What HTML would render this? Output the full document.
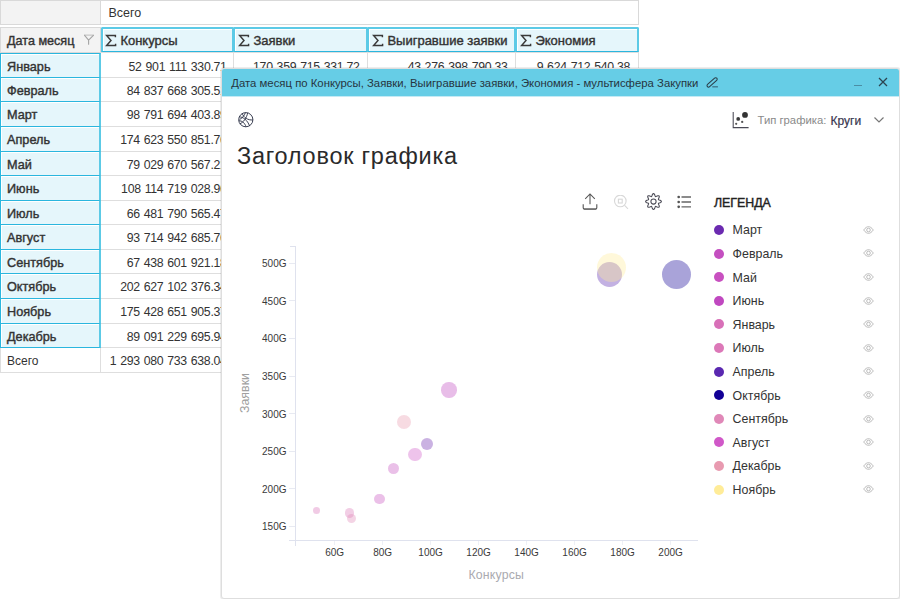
<!DOCTYPE html>
<html><head><meta charset="utf-8"><style>
*{box-sizing:border-box}
html,body{margin:0;padding:0;width:900px;height:599px;overflow:hidden;background:#fff;font-family:"Liberation Sans",sans-serif;color:#333}
.a{position:absolute}
.t{position:absolute;white-space:pre;line-height:1}
.sb{-webkit-text-stroke:0.4px currentColor}
</style></head><body>

<div class="a" style="left:0;top:0;width:101px;height:25px;background:#f3f3f3;border:1px solid #d9d9d9"></div>
<div class="a" style="left:100px;top:0;width:539px;height:25px;background:#fff;border:1px solid #d9d9d9"></div>
<div class="t" style="left:108.5px;top:7.3px;font-size:12.5px">Всего</div>
<div class="a" style="left:0;top:27px;width:101px;height:26px;background:#f3f3f3;border:1px solid #d9d9d9"></div>
<div class="t sb" style="left:7px;top:35px;font-size:12.6px;color:#333">Дата месяц</div>
<svg class="a" style="left:83px;top:34px" width="13" height="12" viewBox="0 0 13 12" fill="none" stroke-linecap="round" stroke-linejoin="round"><path d="M1.6 1.1H10.4" stroke="#c8c8c8" stroke-width="1.1"/><path d="M1.6 1.3L5.6 6.2V10.2M10.4 1.3L5.6 6.2" stroke="#a4a4a4" stroke-width="1.1"/></svg>
<div class="a" style="left:101px;top:27px;width:133px;height:25px;background:#e5f6fb;border-top:2px solid #5ccae6;border-left:2px solid #5ccae6;border-right:2px solid #5ccae6;border-bottom:1px solid #2ab6de;border-radius:2px 2px 0 0;box-shadow:inset 1px 1px 0 #fff"></div>
<svg class="a" style="left:105px;top:33px" width="12" height="14" viewBox="0 0 12 14" fill="none" stroke="#3a3a3a" stroke-width="1.45" stroke-linejoin="miter"><path d="M10.4 4.2V2.5H1.6L6 7.6 1.6 12.5H10.6V10.8"/></svg>
<div class="t sb" style="left:120.4px;top:33.9px;font-size:13px;color:#333">Конкурсы</div>
<div class="a" style="left:233px;top:27px;width:135px;height:25px;background:#e5f6fb;border-top:2px solid #5ccae6;border-left:2px solid #5ccae6;border-right:2px solid #5ccae6;border-bottom:1px solid #2ab6de;border-radius:2px 2px 0 0;box-shadow:inset 1px 1px 0 #fff"></div>
<svg class="a" style="left:238px;top:33px" width="12" height="14" viewBox="0 0 12 14" fill="none" stroke="#3a3a3a" stroke-width="1.45" stroke-linejoin="miter"><path d="M10.4 4.2V2.5H1.6L6 7.6 1.6 12.5H10.6V10.8"/></svg>
<div class="t sb" style="left:253.4px;top:33.9px;font-size:13px;color:#333">Заявки</div>
<div class="a" style="left:367px;top:27px;width:149px;height:25px;background:#e5f6fb;border-top:2px solid #5ccae6;border-left:2px solid #5ccae6;border-right:2px solid #5ccae6;border-bottom:1px solid #2ab6de;border-radius:2px 2px 0 0;box-shadow:inset 1px 1px 0 #fff"></div>
<svg class="a" style="left:372px;top:33px" width="12" height="14" viewBox="0 0 12 14" fill="none" stroke="#3a3a3a" stroke-width="1.45" stroke-linejoin="miter"><path d="M10.4 4.2V2.5H1.6L6 7.6 1.6 12.5H10.6V10.8"/></svg>
<div class="t sb" style="left:387.4px;top:33.9px;font-size:13px;color:#333">Выигравшие заявки</div>
<div class="a" style="left:515px;top:27px;width:124px;height:25px;background:#e5f6fb;border-top:2px solid #5ccae6;border-left:2px solid #5ccae6;border-right:2px solid #5ccae6;border-bottom:1px solid #2ab6de;border-radius:2px 2px 0 0;box-shadow:inset 1px 1px 0 #fff"></div>
<svg class="a" style="left:520px;top:33px" width="12" height="14" viewBox="0 0 12 14" fill="none" stroke="#3a3a3a" stroke-width="1.45" stroke-linejoin="miter"><path d="M10.4 4.2V2.5H1.6L6 7.6 1.6 12.5H10.6V10.8"/></svg>
<div class="t sb" style="left:535.4px;top:33.9px;font-size:13px;color:#333">Экономия</div>
<div class="a" style="left:100px;top:52px;width:134px;height:26px;border:1px solid #dedede;background:#fff"></div>
<div class="t" style="right:673.40px;top:61.00px;font-size:12.3px;letter-spacing:-0.3px;word-spacing:0.8px;color:#333">52 901 111 330.71</div>
<div class="a" style="left:233px;top:52px;width:135px;height:26px;border:1px solid #dedede;background:#fff"></div>
<div class="t" style="right:540.50px;top:61.00px;font-size:12.3px;letter-spacing:-0.3px;word-spacing:0.8px;color:#333">170 359 715 331.72</div>
<div class="a" style="left:367px;top:52px;width:149px;height:26px;border:1px solid #dedede;background:#fff"></div>
<div class="t" style="right:392.50px;top:61.00px;font-size:12.3px;letter-spacing:-0.3px;word-spacing:0.8px;color:#333">43 276 398 790.33</div>
<div class="a" style="left:515px;top:52px;width:124px;height:26px;border:1px solid #dedede;background:#fff"></div>
<div class="t" style="right:270.00px;top:61.00px;font-size:12.3px;letter-spacing:-0.3px;word-spacing:0.8px;color:#333">9 624 712 540.38</div>
<div class="a" style="left:100px;top:77px;width:134px;height:25px;border:1px solid #dedede;background:#fff"></div>
<div class="t" style="right:673.40px;top:85.00px;font-size:12.3px;letter-spacing:-0.3px;word-spacing:0.8px;color:#333">84 837 668 305.51</div>
<div class="a" style="left:233px;top:77px;width:135px;height:25px;border:1px solid #dedede;background:#fff"></div>
<div class="a" style="left:367px;top:77px;width:149px;height:25px;border:1px solid #dedede;background:#fff"></div>
<div class="a" style="left:515px;top:77px;width:124px;height:25px;border:1px solid #dedede;background:#fff"></div>
<div class="a" style="left:100px;top:101px;width:134px;height:26px;border:1px solid #dedede;background:#fff"></div>
<div class="t" style="right:673.40px;top:109.00px;font-size:12.3px;letter-spacing:-0.3px;word-spacing:0.8px;color:#333">98 791 694 403.89</div>
<div class="a" style="left:233px;top:101px;width:135px;height:26px;border:1px solid #dedede;background:#fff"></div>
<div class="a" style="left:367px;top:101px;width:149px;height:26px;border:1px solid #dedede;background:#fff"></div>
<div class="a" style="left:515px;top:101px;width:124px;height:26px;border:1px solid #dedede;background:#fff"></div>
<div class="a" style="left:100px;top:126px;width:134px;height:26px;border:1px solid #dedede;background:#fff"></div>
<div class="t" style="right:673.40px;top:134.00px;font-size:12.3px;letter-spacing:-0.3px;word-spacing:0.8px;color:#333">174 623 550 851.76</div>
<div class="a" style="left:233px;top:126px;width:135px;height:26px;border:1px solid #dedede;background:#fff"></div>
<div class="a" style="left:367px;top:126px;width:149px;height:26px;border:1px solid #dedede;background:#fff"></div>
<div class="a" style="left:515px;top:126px;width:124px;height:26px;border:1px solid #dedede;background:#fff"></div>
<div class="a" style="left:100px;top:151px;width:134px;height:25px;border:1px solid #dedede;background:#fff"></div>
<div class="t" style="right:673.40px;top:159.00px;font-size:12.3px;letter-spacing:-0.3px;word-spacing:0.8px;color:#333">79 029 670 567.21</div>
<div class="a" style="left:233px;top:151px;width:135px;height:25px;border:1px solid #dedede;background:#fff"></div>
<div class="a" style="left:367px;top:151px;width:149px;height:25px;border:1px solid #dedede;background:#fff"></div>
<div class="a" style="left:515px;top:151px;width:124px;height:25px;border:1px solid #dedede;background:#fff"></div>
<div class="a" style="left:100px;top:175px;width:134px;height:26px;border:1px solid #dedede;background:#fff"></div>
<div class="t" style="right:673.40px;top:183.00px;font-size:12.3px;letter-spacing:-0.3px;word-spacing:0.8px;color:#333">108 114 719 028.96</div>
<div class="a" style="left:233px;top:175px;width:135px;height:26px;border:1px solid #dedede;background:#fff"></div>
<div class="a" style="left:367px;top:175px;width:149px;height:26px;border:1px solid #dedede;background:#fff"></div>
<div class="a" style="left:515px;top:175px;width:124px;height:26px;border:1px solid #dedede;background:#fff"></div>
<div class="a" style="left:100px;top:200px;width:134px;height:25px;border:1px solid #dedede;background:#fff"></div>
<div class="t" style="right:673.40px;top:208.00px;font-size:12.3px;letter-spacing:-0.3px;word-spacing:0.8px;color:#333">66 481 790 565.47</div>
<div class="a" style="left:233px;top:200px;width:135px;height:25px;border:1px solid #dedede;background:#fff"></div>
<div class="a" style="left:367px;top:200px;width:149px;height:25px;border:1px solid #dedede;background:#fff"></div>
<div class="a" style="left:515px;top:200px;width:124px;height:25px;border:1px solid #dedede;background:#fff"></div>
<div class="a" style="left:100px;top:224px;width:134px;height:26px;border:1px solid #dedede;background:#fff"></div>
<div class="t" style="right:673.40px;top:232.00px;font-size:12.3px;letter-spacing:-0.3px;word-spacing:0.8px;color:#333">93 714 942 685.76</div>
<div class="a" style="left:233px;top:224px;width:135px;height:26px;border:1px solid #dedede;background:#fff"></div>
<div class="a" style="left:367px;top:224px;width:149px;height:26px;border:1px solid #dedede;background:#fff"></div>
<div class="a" style="left:515px;top:224px;width:124px;height:26px;border:1px solid #dedede;background:#fff"></div>
<div class="a" style="left:100px;top:249px;width:134px;height:25px;border:1px solid #dedede;background:#fff"></div>
<div class="t" style="right:673.40px;top:257.00px;font-size:12.3px;letter-spacing:-0.3px;word-spacing:0.8px;color:#333">67 438 601 921.18</div>
<div class="a" style="left:233px;top:249px;width:135px;height:25px;border:1px solid #dedede;background:#fff"></div>
<div class="a" style="left:367px;top:249px;width:149px;height:25px;border:1px solid #dedede;background:#fff"></div>
<div class="a" style="left:515px;top:249px;width:124px;height:25px;border:1px solid #dedede;background:#fff"></div>
<div class="a" style="left:100px;top:273px;width:134px;height:26px;border:1px solid #dedede;background:#fff"></div>
<div class="t" style="right:673.40px;top:281.00px;font-size:12.3px;letter-spacing:-0.3px;word-spacing:0.8px;color:#333">202 627 102 376.34</div>
<div class="a" style="left:233px;top:273px;width:135px;height:26px;border:1px solid #dedede;background:#fff"></div>
<div class="a" style="left:367px;top:273px;width:149px;height:26px;border:1px solid #dedede;background:#fff"></div>
<div class="a" style="left:515px;top:273px;width:124px;height:26px;border:1px solid #dedede;background:#fff"></div>
<div class="a" style="left:100px;top:298px;width:134px;height:26px;border:1px solid #dedede;background:#fff"></div>
<div class="t" style="right:673.40px;top:306.00px;font-size:12.3px;letter-spacing:-0.3px;word-spacing:0.8px;color:#333">175 428 651 905.37</div>
<div class="a" style="left:233px;top:298px;width:135px;height:26px;border:1px solid #dedede;background:#fff"></div>
<div class="a" style="left:367px;top:298px;width:149px;height:26px;border:1px solid #dedede;background:#fff"></div>
<div class="a" style="left:515px;top:298px;width:124px;height:26px;border:1px solid #dedede;background:#fff"></div>
<div class="a" style="left:100px;top:323px;width:134px;height:25px;border:1px solid #dedede;background:#fff"></div>
<div class="t" style="right:673.40px;top:331.00px;font-size:12.3px;letter-spacing:-0.3px;word-spacing:0.8px;color:#333">89 091 229 695.94</div>
<div class="a" style="left:233px;top:323px;width:135px;height:25px;border:1px solid #dedede;background:#fff"></div>
<div class="a" style="left:367px;top:323px;width:149px;height:25px;border:1px solid #dedede;background:#fff"></div>
<div class="a" style="left:515px;top:323px;width:124px;height:25px;border:1px solid #dedede;background:#fff"></div>
<div class="a" style="left:100px;top:347px;width:134px;height:26px;border:1px solid #dedede;background:#fff"></div>
<div class="t" style="right:673.40px;top:355.00px;font-size:12.3px;letter-spacing:-0.3px;word-spacing:0.8px;color:#333">1 293 080 733 638.04</div>
<div class="a" style="left:233px;top:347px;width:135px;height:26px;border:1px solid #dedede;background:#fff"></div>
<div class="a" style="left:367px;top:347px;width:149px;height:26px;border:1px solid #dedede;background:#fff"></div>
<div class="a" style="left:515px;top:347px;width:124px;height:26px;border:1px solid #dedede;background:#fff"></div>
<div class="a" style="left:0;top:347px;width:101px;height:26px;background:#fff;border:1px solid #dedede"></div>
<div class="t" style="left:7px;top:354.60px;font-size:12px">Всего</div>
<div class="a" style="left:0;top:53px;width:101px;height:25px;background:#e5f6fb;border:1px solid #2ab6de;border-right:2px solid #5ccae6;box-shadow:inset 1px 1px 0 #fff"></div>
<div class="t sb" style="left:7px;top:60.60px;font-size:12.7px;color:#333">Январь</div>
<div class="a" style="left:0;top:77px;width:101px;height:25px;background:#e5f6fb;border:1px solid #2ab6de;border-right:2px solid #5ccae6;box-shadow:inset 1px 1px 0 #fff"></div>
<div class="t sb" style="left:7px;top:84.60px;font-size:12.7px;color:#333">Февраль</div>
<div class="a" style="left:0;top:101px;width:101px;height:26px;background:#e5f6fb;border:1px solid #2ab6de;border-right:2px solid #5ccae6;box-shadow:inset 1px 1px 0 #fff"></div>
<div class="t sb" style="left:7px;top:108.60px;font-size:12.7px;color:#333">Март</div>
<div class="a" style="left:0;top:126px;width:101px;height:26px;background:#e5f6fb;border:1px solid #2ab6de;border-right:2px solid #5ccae6;box-shadow:inset 1px 1px 0 #fff"></div>
<div class="t sb" style="left:7px;top:133.60px;font-size:12.7px;color:#333">Апрель</div>
<div class="a" style="left:0;top:151px;width:101px;height:25px;background:#e5f6fb;border:1px solid #2ab6de;border-right:2px solid #5ccae6;box-shadow:inset 1px 1px 0 #fff"></div>
<div class="t sb" style="left:7px;top:158.60px;font-size:12.7px;color:#333">Май</div>
<div class="a" style="left:0;top:175px;width:101px;height:26px;background:#e5f6fb;border:1px solid #2ab6de;border-right:2px solid #5ccae6;box-shadow:inset 1px 1px 0 #fff"></div>
<div class="t sb" style="left:7px;top:182.60px;font-size:12.7px;color:#333">Июнь</div>
<div class="a" style="left:0;top:200px;width:101px;height:25px;background:#e5f6fb;border:1px solid #2ab6de;border-right:2px solid #5ccae6;box-shadow:inset 1px 1px 0 #fff"></div>
<div class="t sb" style="left:7px;top:207.60px;font-size:12.7px;color:#333">Июль</div>
<div class="a" style="left:0;top:224px;width:101px;height:26px;background:#e5f6fb;border:1px solid #2ab6de;border-right:2px solid #5ccae6;box-shadow:inset 1px 1px 0 #fff"></div>
<div class="t sb" style="left:7px;top:231.60px;font-size:12.7px;color:#333">Август</div>
<div class="a" style="left:0;top:249px;width:101px;height:25px;background:#e5f6fb;border:1px solid #2ab6de;border-right:2px solid #5ccae6;box-shadow:inset 1px 1px 0 #fff"></div>
<div class="t sb" style="left:7px;top:256.60px;font-size:12.7px;color:#333">Сентябрь</div>
<div class="a" style="left:0;top:273px;width:101px;height:26px;background:#e5f6fb;border:1px solid #2ab6de;border-right:2px solid #5ccae6;box-shadow:inset 1px 1px 0 #fff"></div>
<div class="t sb" style="left:7px;top:280.60px;font-size:12.7px;color:#333">Октябрь</div>
<div class="a" style="left:0;top:298px;width:101px;height:26px;background:#e5f6fb;border:1px solid #2ab6de;border-right:2px solid #5ccae6;box-shadow:inset 1px 1px 0 #fff"></div>
<div class="t sb" style="left:7px;top:305.60px;font-size:12.7px;color:#333">Ноябрь</div>
<div class="a" style="left:0;top:323px;width:101px;height:25px;background:#e5f6fb;border:1px solid #2ab6de;border-right:2px solid #5ccae6;box-shadow:inset 1px 1px 0 #fff"></div>
<div class="t sb" style="left:7px;top:330.60px;font-size:12.7px;color:#333">Декабрь</div>
<div class="a" style="left:221px;top:68px;width:679px;height:531px;background:#fff;border:1px solid #dedede;border-radius:3px;overflow:hidden;box-shadow:0 0 0 1px rgba(0,0,0,0.07)">
<div class="a" style="left:0;top:0;width:677px;height:27px;background:#66cde6"></div>
<div class="a" style="left:0;top:27px;width:677px;height:1px;background:#c4eaf5"></div>
</div>
<div class="t" style="left:231.3px;top:78px;font-size:11.35px;color:#26353f">Дата месяц по Конкурсы, Заявки, Выигравшие заявки, Экономия - мультисфера Закупки</div>
<svg class="a" style="left:705px;top:76px" width="15" height="14" viewBox="0 0 15 14"><rect x="-6.3" y="-1.55" width="12.6" height="3.1" rx="1.55" fill="none" stroke="#2a3d48" stroke-width="1.05" transform="translate(7.1 6.4) rotate(-42)"/><path d="M7.3 10.8h5.6" stroke="#3f7489" stroke-width="1.3"/></svg>
<div class="a" style="left:853.7px;top:84.8px;width:8px;height:1.5px;background:#4b8ea4"></div>
<svg class="a" style="left:877px;top:76px" width="12" height="12" viewBox="0 0 12 12"><path d="M2 2l8 8M10 2l-8 8" stroke="#2c4450" stroke-width="1.25"/></svg>
<svg class="a" style="left:237px;top:111px" width="18" height="18" viewBox="0 0 18 18" fill="none" stroke="#30364a" stroke-width="0.95"><circle cx="8.8" cy="8.7" r="7.1"/><path d="M2.2 5.8C6 6 10.5 9 12.6 15.1M5.2 2.4C6.5 6.5 11 9.5 16 8.9M2.8 12.8C6.5 11.5 9.5 7 10.8 1.8M1.8 9.8C5 9.6 8 12 9 15.9M8.5 1.5C7.5 4.5 5 7.5 2.5 8.5"/></svg>
<svg class="a" style="left:731px;top:111px" width="19" height="18" viewBox="0 0 19 18"><path d="M2.2 1v15.6h15.4" fill="none" stroke="#4a4a55" stroke-width="1.05"/><circle cx="14" cy="3.9" r="2.9" fill="#333"/><circle cx="7.2" cy="7.9" r="1.9" fill="#3a3a3a"/><circle cx="11.2" cy="10.9" r="1.15" fill="#555"/><circle cx="5.2" cy="12.8" r="1.1" fill="#555"/></svg>
<div class="t" style="left:757.5px;top:114.7px;font-size:11.3px;color:#8a8a8a">Тип графика:</div>
<div class="t" style="left:830.5px;top:114.7px;font-size:12px;color:#38364f;-webkit-text-stroke:0.2px #38364f">Круги</div>
<svg class="a" style="left:873px;top:115.6px" width="12" height="8" viewBox="0 0 12 8"><path d="M1.5 1.5l4.5 4.5 4.5-4.5" fill="none" stroke="#777" stroke-width="1.2"/></svg>
<div class="t" style="left:237px;top:144.9px;font-size:23.5px;letter-spacing:0.75px;color:#2a2a2a">Заголовок графика</div>
<svg class="a" style="left:581px;top:192px" width="18" height="19" viewBox="0 0 18 19" fill="none" stroke="#555" stroke-width="1.05"><path d="M9 2.3V12.2M4.2 6.8L9 2l4.8 4.8"/><path d="M2.2 12.2v3.6a1.3 1.3 0 0 0 1.3 1.3h11a1.3 1.3 0 0 0 1.3-1.3v-3.6" stroke-width="1.1"/><path d="M3 17.1h12" stroke="#707070" stroke-width="1.3"/></svg>
<svg class="a" style="left:613px;top:195px" width="17" height="16" viewBox="0 0 17 16" fill="none" stroke="#d8d8d8" stroke-width="1.1"><circle cx="7.3" cy="6" r="5.8"/><rect x="5.4" y="4.2" width="3.8" height="3.8"/><path d="M11.6 10.4l3.4 3.4"/></svg>
<svg class="a" style="left:643.5px;top:192px" width="19" height="19" viewBox="0 0 19 19" fill="none" stroke="#4a4a55" stroke-width="1.05"><path d="M9.50 1.60 L10.01 1.79 L10.45 2.31 L10.79 3.03 L11.04 3.75 L11.26 4.32 L11.53 4.60 L11.92 4.59 L12.47 4.35 L13.17 4.01 L13.91 3.75 L14.59 3.69 L15.09 3.91 L15.31 4.41 L15.25 5.09 L14.99 5.83 L14.65 6.52 L14.41 7.08 L14.40 7.47 L14.68 7.74 L15.25 7.96 L15.97 8.21 L16.69 8.55 L17.21 8.99 L17.40 9.50 L17.21 10.01 L16.69 10.45 L15.97 10.79 L15.25 11.04 L14.68 11.26 L14.40 11.53 L14.41 11.92 L14.65 12.47 L14.99 13.17 L15.25 13.91 L15.31 14.59 L15.09 15.09 L14.59 15.31 L13.91 15.25 L13.17 14.99 L12.47 14.65 L11.92 14.41 L11.53 14.40 L11.26 14.68 L11.04 15.25 L10.79 15.97 L10.45 16.69 L10.01 17.21 L9.50 17.40 L8.99 17.21 L8.55 16.69 L8.21 15.97 L7.96 15.25 L7.74 14.68 L7.47 14.40 L7.08 14.41 L6.52 14.65 L5.83 14.99 L5.09 15.25 L4.41 15.31 L3.91 15.09 L3.69 14.59 L3.75 13.91 L4.01 13.17 L4.35 12.48 L4.59 11.92 L4.60 11.53 L4.32 11.26 L3.75 11.04 L3.03 10.79 L2.31 10.45 L1.79 10.01 L1.60 9.50 L1.79 8.99 L2.31 8.55 L3.03 8.21 L3.75 7.96 L4.32 7.74 L4.60 7.47 L4.59 7.08 L4.35 6.52 L4.01 5.83 L3.75 5.09 L3.69 4.41 L3.91 3.91 L4.41 3.69 L5.09 3.75 L5.83 4.01 L6.52 4.35 L7.08 4.59 L7.47 4.60 L7.74 4.32 L7.96 3.75 L8.21 3.03 L8.55 2.31 L8.99 1.79 L9.50 1.60z"/><circle cx="9.5" cy="9.5" r="2.6"/></svg>
<svg class="a" style="left:676px;top:194px" width="17" height="16" viewBox="0 0 17 16"><g fill="#555"><circle cx="2.7" cy="3" r="1.35"/><circle cx="2.7" cy="8" r="1.35"/><circle cx="2.7" cy="12.8" r="1.35"/></g><path d="M5.5 3h9.5M5.5 8h9.5M5.5 12.8h9.5" stroke="#666" stroke-width="1.3"/></svg>
<div class="t" style="left:713.9px;top:196.5px;font-size:12.4px;color:#222;-webkit-text-stroke:0.4px #222">ЛЕГЕНДА</div>
<div class="a" style="left:714px;top:225.00px;width:10px;height:10px;border-radius:50%;background:#6b2ab0"></div>
<div class="t" style="left:732.6px;top:224.30px;font-size:12.4px;color:#333">Март</div>
<svg class="a" style="left:863px;top:225.70px" width="11" height="8" viewBox="0 0 11 8" fill="none" stroke="#b4b4b4" stroke-width="0.9"><path d="M0.7 4C2.5 1.4 4.2 0.7 5.5 0.7S8.5 1.4 10.3 4C8.5 6.6 6.8 7.3 5.5 7.3S2.5 6.6 0.7 4z"/><circle cx="5.5" cy="4" r="1.8"/></svg>
<div class="a" style="left:714px;top:248.60px;width:10px;height:10px;border-radius:50%;background:#c44fc0"></div>
<div class="t" style="left:732.6px;top:247.90px;font-size:12.4px;color:#333">Февраль</div>
<svg class="a" style="left:863px;top:249.30px" width="11" height="8" viewBox="0 0 11 8" fill="none" stroke="#b4b4b4" stroke-width="0.9"><path d="M0.7 4C2.5 1.4 4.2 0.7 5.5 0.7S8.5 1.4 10.3 4C8.5 6.6 6.8 7.3 5.5 7.3S2.5 6.6 0.7 4z"/><circle cx="5.5" cy="4" r="1.8"/></svg>
<div class="a" style="left:714px;top:272.20px;width:10px;height:10px;border-radius:50%;background:#c850c0"></div>
<div class="t" style="left:732.6px;top:271.50px;font-size:12.4px;color:#333">Май</div>
<svg class="a" style="left:863px;top:272.90px" width="11" height="8" viewBox="0 0 11 8" fill="none" stroke="#b4b4b4" stroke-width="0.9"><path d="M0.7 4C2.5 1.4 4.2 0.7 5.5 0.7S8.5 1.4 10.3 4C8.5 6.6 6.8 7.3 5.5 7.3S2.5 6.6 0.7 4z"/><circle cx="5.5" cy="4" r="1.8"/></svg>
<div class="a" style="left:714px;top:295.80px;width:10px;height:10px;border-radius:50%;background:#c048c0"></div>
<div class="t" style="left:732.6px;top:295.10px;font-size:12.4px;color:#333">Июнь</div>
<svg class="a" style="left:863px;top:296.50px" width="11" height="8" viewBox="0 0 11 8" fill="none" stroke="#b4b4b4" stroke-width="0.9"><path d="M0.7 4C2.5 1.4 4.2 0.7 5.5 0.7S8.5 1.4 10.3 4C8.5 6.6 6.8 7.3 5.5 7.3S2.5 6.6 0.7 4z"/><circle cx="5.5" cy="4" r="1.8"/></svg>
<div class="a" style="left:714px;top:319.40px;width:10px;height:10px;border-radius:50%;background:#d870b8"></div>
<div class="t" style="left:732.6px;top:318.70px;font-size:12.4px;color:#333">Январь</div>
<svg class="a" style="left:863px;top:320.10px" width="11" height="8" viewBox="0 0 11 8" fill="none" stroke="#b4b4b4" stroke-width="0.9"><path d="M0.7 4C2.5 1.4 4.2 0.7 5.5 0.7S8.5 1.4 10.3 4C8.5 6.6 6.8 7.3 5.5 7.3S2.5 6.6 0.7 4z"/><circle cx="5.5" cy="4" r="1.8"/></svg>
<div class="a" style="left:714px;top:343.00px;width:10px;height:10px;border-radius:50%;background:#dc78b8"></div>
<div class="t" style="left:732.6px;top:342.30px;font-size:12.4px;color:#333">Июль</div>
<svg class="a" style="left:863px;top:343.70px" width="11" height="8" viewBox="0 0 11 8" fill="none" stroke="#b4b4b4" stroke-width="0.9"><path d="M0.7 4C2.5 1.4 4.2 0.7 5.5 0.7S8.5 1.4 10.3 4C8.5 6.6 6.8 7.3 5.5 7.3S2.5 6.6 0.7 4z"/><circle cx="5.5" cy="4" r="1.8"/></svg>
<div class="a" style="left:714px;top:366.60px;width:10px;height:10px;border-radius:50%;background:#5a28b0"></div>
<div class="t" style="left:732.6px;top:365.90px;font-size:12.4px;color:#333">Апрель</div>
<svg class="a" style="left:863px;top:367.30px" width="11" height="8" viewBox="0 0 11 8" fill="none" stroke="#b4b4b4" stroke-width="0.9"><path d="M0.7 4C2.5 1.4 4.2 0.7 5.5 0.7S8.5 1.4 10.3 4C8.5 6.6 6.8 7.3 5.5 7.3S2.5 6.6 0.7 4z"/><circle cx="5.5" cy="4" r="1.8"/></svg>
<div class="a" style="left:714px;top:390.20px;width:10px;height:10px;border-radius:50%;background:#120096"></div>
<div class="t" style="left:732.6px;top:389.50px;font-size:12.4px;color:#333">Октябрь</div>
<svg class="a" style="left:863px;top:390.90px" width="11" height="8" viewBox="0 0 11 8" fill="none" stroke="#b4b4b4" stroke-width="0.9"><path d="M0.7 4C2.5 1.4 4.2 0.7 5.5 0.7S8.5 1.4 10.3 4C8.5 6.6 6.8 7.3 5.5 7.3S2.5 6.6 0.7 4z"/><circle cx="5.5" cy="4" r="1.8"/></svg>
<div class="a" style="left:714px;top:413.80px;width:10px;height:10px;border-radius:50%;background:#e088b8"></div>
<div class="t" style="left:732.6px;top:413.10px;font-size:12.4px;color:#333">Сентябрь</div>
<svg class="a" style="left:863px;top:414.50px" width="11" height="8" viewBox="0 0 11 8" fill="none" stroke="#b4b4b4" stroke-width="0.9"><path d="M0.7 4C2.5 1.4 4.2 0.7 5.5 0.7S8.5 1.4 10.3 4C8.5 6.6 6.8 7.3 5.5 7.3S2.5 6.6 0.7 4z"/><circle cx="5.5" cy="4" r="1.8"/></svg>
<div class="a" style="left:714px;top:437.40px;width:10px;height:10px;border-radius:50%;background:#d058c8"></div>
<div class="t" style="left:732.6px;top:436.70px;font-size:12.4px;color:#333">Август</div>
<svg class="a" style="left:863px;top:438.10px" width="11" height="8" viewBox="0 0 11 8" fill="none" stroke="#b4b4b4" stroke-width="0.9"><path d="M0.7 4C2.5 1.4 4.2 0.7 5.5 0.7S8.5 1.4 10.3 4C8.5 6.6 6.8 7.3 5.5 7.3S2.5 6.6 0.7 4z"/><circle cx="5.5" cy="4" r="1.8"/></svg>
<div class="a" style="left:714px;top:461.00px;width:10px;height:10px;border-radius:50%;background:#e89ab0"></div>
<div class="t" style="left:732.6px;top:460.30px;font-size:12.4px;color:#333">Декабрь</div>
<svg class="a" style="left:863px;top:461.70px" width="11" height="8" viewBox="0 0 11 8" fill="none" stroke="#b4b4b4" stroke-width="0.9"><path d="M0.7 4C2.5 1.4 4.2 0.7 5.5 0.7S8.5 1.4 10.3 4C8.5 6.6 6.8 7.3 5.5 7.3S2.5 6.6 0.7 4z"/><circle cx="5.5" cy="4" r="1.8"/></svg>
<div class="a" style="left:714px;top:484.60px;width:10px;height:10px;border-radius:50%;background:#ffec98"></div>
<div class="t" style="left:732.6px;top:483.90px;font-size:12.4px;color:#333">Ноябрь</div>
<svg class="a" style="left:863px;top:485.30px" width="11" height="8" viewBox="0 0 11 8" fill="none" stroke="#b4b4b4" stroke-width="0.9"><path d="M0.7 4C2.5 1.4 4.2 0.7 5.5 0.7S8.5 1.4 10.3 4C8.5 6.6 6.8 7.3 5.5 7.3S2.5 6.6 0.7 4z"/><circle cx="5.5" cy="4" r="1.8"/></svg>
<div class="a" style="left:295px;top:246px;width:1px;height:300px;background:#dfe2ee"></div>
<div class="a" style="left:290px;top:246px;width:6px;height:1px;background:#dfe2ee"></div>
<div class="a" style="left:289px;top:540px;width:409px;height:1px;background:#dfe2ee"></div>
<div class="a" style="left:289px;top:262.80px;width:6px;height:1px;background:#e8eaf2"></div>
<div class="t" style="right:613.50px;top:259.20px;font-size:10px;color:#3a3a3a">500G</div>
<div class="a" style="left:289px;top:300.40px;width:6px;height:1px;background:#e8eaf2"></div>
<div class="t" style="right:613.50px;top:296.80px;font-size:10px;color:#3a3a3a">450G</div>
<div class="a" style="left:289px;top:338.00px;width:6px;height:1px;background:#e8eaf2"></div>
<div class="t" style="right:613.50px;top:334.40px;font-size:10px;color:#3a3a3a">400G</div>
<div class="a" style="left:289px;top:375.60px;width:6px;height:1px;background:#e8eaf2"></div>
<div class="t" style="right:613.50px;top:372.00px;font-size:10px;color:#3a3a3a">350G</div>
<div class="a" style="left:289px;top:413.20px;width:6px;height:1px;background:#e8eaf2"></div>
<div class="t" style="right:613.50px;top:409.60px;font-size:10px;color:#3a3a3a">300G</div>
<div class="a" style="left:289px;top:450.80px;width:6px;height:1px;background:#e8eaf2"></div>
<div class="t" style="right:613.50px;top:447.20px;font-size:10px;color:#3a3a3a">250G</div>
<div class="a" style="left:289px;top:488.40px;width:6px;height:1px;background:#e8eaf2"></div>
<div class="t" style="right:613.50px;top:484.80px;font-size:10px;color:#3a3a3a">200G</div>
<div class="a" style="left:289px;top:526.00px;width:6px;height:1px;background:#e8eaf2"></div>
<div class="t" style="right:613.50px;top:522.40px;font-size:10px;color:#3a3a3a">150G</div>
<div class="a" style="left:333.60px;top:541px;width:1px;height:4px;background:#eef0f6"></div>
<div class="t" style="left:314.60px;top:547.7px;font-size:10px;color:#3a3a3a;width:40px;text-align:center">60G</div>
<div class="a" style="left:381.60px;top:541px;width:1px;height:4px;background:#eef0f6"></div>
<div class="t" style="left:362.60px;top:547.7px;font-size:10px;color:#3a3a3a;width:40px;text-align:center">80G</div>
<div class="a" style="left:429.60px;top:541px;width:1px;height:4px;background:#eef0f6"></div>
<div class="t" style="left:410.60px;top:547.7px;font-size:10px;color:#3a3a3a;width:40px;text-align:center">100G</div>
<div class="a" style="left:477.60px;top:541px;width:1px;height:4px;background:#eef0f6"></div>
<div class="t" style="left:458.60px;top:547.7px;font-size:10px;color:#3a3a3a;width:40px;text-align:center">120G</div>
<div class="a" style="left:525.60px;top:541px;width:1px;height:4px;background:#eef0f6"></div>
<div class="t" style="left:506.60px;top:547.7px;font-size:10px;color:#3a3a3a;width:40px;text-align:center">140G</div>
<div class="a" style="left:573.60px;top:541px;width:1px;height:4px;background:#eef0f6"></div>
<div class="t" style="left:554.60px;top:547.7px;font-size:10px;color:#3a3a3a;width:40px;text-align:center">160G</div>
<div class="a" style="left:621.60px;top:541px;width:1px;height:4px;background:#eef0f6"></div>
<div class="t" style="left:602.60px;top:547.7px;font-size:10px;color:#3a3a3a;width:40px;text-align:center">180G</div>
<div class="a" style="left:669.60px;top:541px;width:1px;height:4px;background:#eef0f6"></div>
<div class="t" style="left:650.60px;top:547.7px;font-size:10px;color:#3a3a3a;width:40px;text-align:center">200G</div>
<div class="t" style="left:468.4px;top:569.3px;font-size:12.3px;color:#aaaab0;letter-spacing:0.2px">Конкурсы</div>
<div class="t" style="left:244.9px;top:393px;font-size:12.4px;color:#a0a0a0;transform:translate(-50%,-50%) rotate(-90deg)">Заявки</div>
<div class="a" style="left:420.60px;top:437.60px;width:12.80px;height:12.80px;border-radius:50%;background:#6b2ab0;opacity:0.36"></div>
<div class="a" style="left:388.00px;top:462.80px;width:11.20px;height:11.20px;border-radius:50%;background:#c44fc0;opacity:0.36"></div>
<div class="a" style="left:374.05px;top:493.55px;width:10.70px;height:10.70px;border-radius:50%;background:#c850c0;opacity:0.36"></div>
<div class="a" style="left:441.45px;top:382.25px;width:15.50px;height:15.50px;border-radius:50%;background:#c048c0;opacity:0.36"></div>
<div class="a" style="left:313.10px;top:507.40px;width:7.00px;height:7.00px;border-radius:50%;background:#d870b8;opacity:0.36"></div>
<div class="a" style="left:344.95px;top:508.45px;width:9.10px;height:9.10px;border-radius:50%;background:#dc78b8;opacity:0.36"></div>
<div class="a" style="left:596.70px;top:262.30px;width:25.00px;height:25.00px;border-radius:50%;background:#5a28b0;opacity:0.36"></div>
<div class="a" style="left:661.90px;top:259.50px;width:29.40px;height:29.40px;border-radius:50%;background:#120096;opacity:0.36"></div>
<div class="a" style="left:347.05px;top:513.85px;width:9.10px;height:9.10px;border-radius:50%;background:#e088b8;opacity:0.36"></div>
<div class="a" style="left:408.30px;top:447.50px;width:13.40px;height:13.40px;border-radius:50%;background:#d058c8;opacity:0.36"></div>
<div class="a" style="left:396.75px;top:415.15px;width:13.90px;height:13.90px;border-radius:50%;background:#e89ab0;opacity:0.36"></div>
<div class="a" style="left:596.75px;top:252.75px;width:29.30px;height:29.30px;border-radius:50%;background:#ffec98;opacity:0.36"></div>
</body></html>
